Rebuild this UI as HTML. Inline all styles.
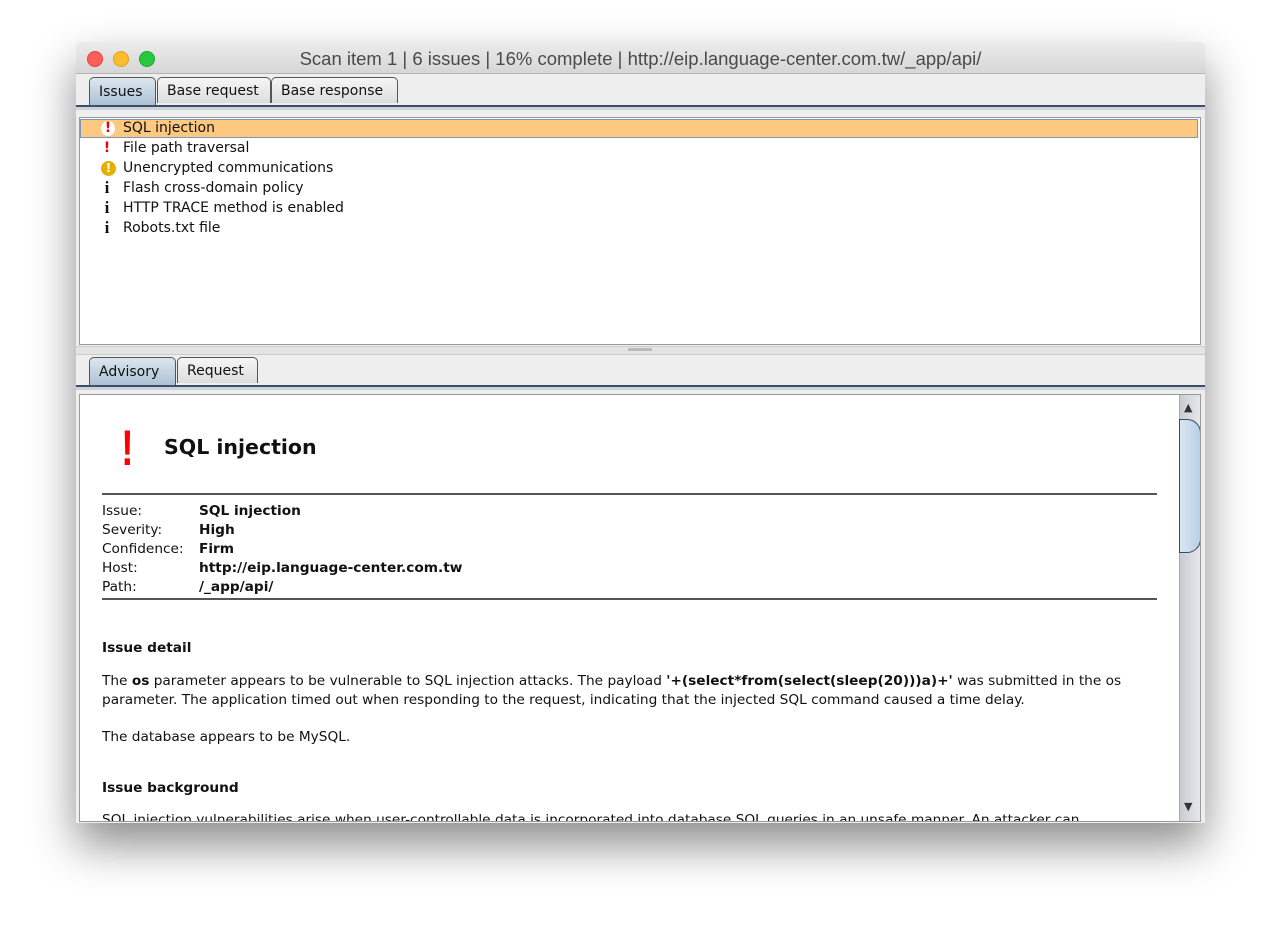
<!DOCTYPE html>
<html><head><style>
body{margin:0;width:1280px;height:933px;background:#fff;position:relative;overflow:hidden;font-family:"DejaVu Sans","Liberation Sans",sans-serif;}
.win{position:absolute;left:76px;top:42px;width:1129px;height:781px;background:#eeeeee;box-shadow:0 22px 45px rgba(0,0,0,0.45);border-radius:5px 5px 0 0;overflow:hidden}
.title{position:absolute;left:0;top:0;width:100%;height:31px;background:linear-gradient(#ececec,#d6d6d6);border-bottom:1px solid #b4b4b4;text-align:center;font:18.5px "Liberation Sans",sans-serif;line-height:33px;color:#4a4a4a}
.dot{position:absolute;top:9px;width:14px;height:14px;border-radius:50%}
.abs{position:absolute}
.tab{position:absolute;height:26px;border:1px solid #555;border-bottom:none;border-radius:5px 5px 0 0;background:linear-gradient(#f6f6f6,#dcdcdc);font-size:14px;line-height:27px;padding:0 9px;box-sizing:border-box;color:#111}
.tab.sel{background:linear-gradient(#dde6ee,#a9bfd3)}
.sepline{position:absolute;left:0;width:1129px;height:3px;border-top:2px solid #3f4e60;background:#cbd4de}
.list{position:absolute;left:3px;top:75px;width:1120px;height:226px;background:#fff;border:1px solid #999}
.row{position:absolute;left:0;height:20px;font-size:14px;line-height:20px;color:#111}
.ic{position:absolute;left:20px;width:14px;text-align:center;font-weight:bold}
.txt{position:absolute;left:43px;white-space:nowrap}
.adv{position:absolute;left:3px;top:352px;width:1120px;height:426px;background:#fff;border:1px solid #999;overflow:hidden}
.p{position:absolute;left:22px;font-size:13.7px;color:#111;white-space:nowrap}
b{font-weight:bold}
</style></head><body>
<div class="win">
 <div class="title">Scan item 1 | 6 issues | 16% complete | http://eip.language-center.com.tw/_app/api/
  <div class="dot" style="left:11px;background:#fc5f57;border:1px solid #e0443e;width:14px;height:14px"></div>
  <div class="dot" style="left:37px;background:#fdbc2e;border:1px solid #dea123;width:14px;height:14px"></div>
  <div class="dot" style="left:63px;background:#28c840;border:1px solid #1aab29;width:14px;height:14px"></div>
 </div>
 <div class="tab sel" style="left:13px;top:35px;width:67px;height:30px;line-height:28px">Issues</div>
 <div class="tab" style="left:81px;top:35px;width:114px">Base request</div>
 <div class="tab" style="left:195px;top:35px;width:127px">Base response</div>
 <div class="sepline" style="top:63px"></div>
 <div class="list">
  <div class="row" style="top:1px;width:1118px;background:#fdc981;border:1px solid #7c98b8;box-sizing:border-box;height:19px;line-height:17px"><span class="ic" style="color:#e00;background:#fff;border-radius:50%;top:1px;height:15px;line-height:15px;left:20px">!</span><span class="txt" style="left:42px">SQL injection</span></div>
  <div class="row" style="top:20px;width:100%"><span class="ic" style="color:#e00">!</span><span class="txt">File path traversal</span></div>
  <div class="row" style="top:40px;width:100%"><span class="ic" style="color:#fff;background:#e5b000;border-radius:50%;top:3px;height:15px;width:15px;line-height:15px;font-size:12px;left:21px">!</span><span class="txt">Unencrypted communications</span></div>
  <div class="row" style="top:60px;width:100%"><span class="ic" style="font-family:'Liberation Serif',serif;font-size:17px">i</span><span class="txt">Flash cross-domain policy</span></div>
  <div class="row" style="top:80px;width:100%"><span class="ic" style="font-family:'Liberation Serif',serif;font-size:17px">i</span><span class="txt">HTTP TRACE method is enabled</span></div>
  <div class="row" style="top:100px;width:100%"><span class="ic" style="font-family:'Liberation Serif',serif;font-size:17px">i</span><span class="txt">Robots.txt file</span></div>
 </div>
 <div class="abs" style="left:0;top:304px;width:1129px;height:7px;background:#e4e4e4;border-top:1px solid #ccc;border-bottom:1px solid #ccc"></div>
 <div class="abs" style="left:552px;top:306px;width:24px;height:3px;background:#bbb"></div>
 <div class="tab sel" style="left:13px;top:315px;width:87px;height:30px;line-height:28px">Advisory</div>
 <div class="tab" style="left:101px;top:315px;width:81px">Request</div>
 <div class="sepline" style="top:343px"></div>
 <div class="adv">
  <div class="abs" style="left:39px;top:24px;font:bold 50px 'Liberation Sans Narrow','Liberation Sans',sans-serif;color:#f00;transform:scaleX(0.75)">!</div>
  <div class="p" style="left:84px;top:40px;font-size:20.5px;font-weight:bold">SQL injection</div>
  <div class="abs" style="left:22px;top:98px;width:1055px;height:2px;background:#555"></div>
  <div class="p" style="top:107px;line-height:19px">Issue:<br>Severity:<br>Confidence:<br>Host:<br>Path:</div>
  <div class="p" style="left:119px;top:107px;line-height:19px;font-weight:bold">SQL injection<br>High<br>Firm<br>http://eip.language-center.com.tw<br>/_app/api/</div>
  <div class="abs" style="left:22px;top:203px;width:1055px;height:2px;background:#555"></div>
  <div class="p" style="top:245px;font-weight:bold">Issue detail</div>
  <div class="p" style="top:277px;line-height:19px">The <b>os</b> parameter appears to be vulnerable to SQL injection attacks. The payload <b>'+(select*from(select(sleep(20)))a)+'</b> was submitted in the os<br>parameter. The application timed out when responding to the request, indicating that the injected SQL command caused a time delay.</div>
  <div class="p" style="top:334px">The database appears to be MySQL.</div>
  <div class="p" style="top:385px;font-weight:bold">Issue background</div>
  <div class="p" style="top:417px">SQL injection vulnerabilities arise when user-controllable data is incorporated into database SQL queries in an unsafe manner. An attacker can</div>
  <div class="abs" style="left:1099px;top:0;width:21px;height:426px;background:linear-gradient(90deg,#c9ccd2,#e6e8ec);border-left:1px solid #aaa"></div>
  <div class="abs" style="left:1104px;top:6px;font-size:11px;color:#333">▲</div>
  <div class="abs" style="left:1104px;top:405px;font-size:11px;color:#333">▼</div>
  <div class="abs" style="left:1099px;top:24px;width:20px;height:132px;border:1px solid #3c4a5c;border-radius:0 14px 14px 0;background:linear-gradient(90deg,#d8e6f3,#b9d0e6)"></div>
 </div>
</div>
</body></html>
